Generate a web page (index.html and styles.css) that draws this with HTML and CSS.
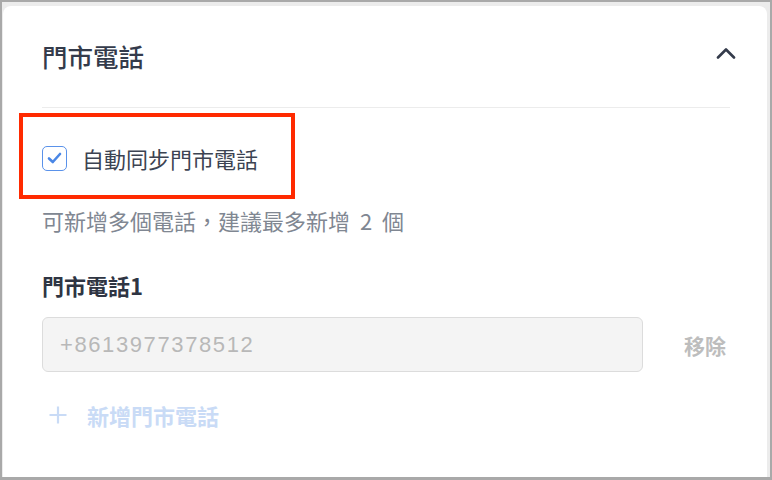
FILE: index.html
```html
<!DOCTYPE html>
<html lang="zh-Hant">
<head>
    <meta charset="UTF-8">
    <meta name="viewport" content="width=device-width, initial-scale=1.0">
    <title>門市電話</title>
    <link rel="stylesheet" href="styles.css">
</head>
<body>
    <div class="frame">
        <div class="card">
            <div class="card-header">
                <h2>門市電話</h2>
                <svg class="chevron" width="20" height="12" viewBox="0 0 20 12">
                    <polyline points="2,10.5 10,2.5 18,10.5" fill="none" stroke="#343b4b" stroke-width="2.6" stroke-linecap="round" stroke-linejoin="round"/>
                </svg>
            </div>

            <label class="sync-row">
                <span class="checkbox">
                    <svg width="15" height="12" viewBox="0 0 15 12">
                        <polyline points="2,6.5 5.8,10 13,2" fill="none" stroke="#4a87e6" stroke-width="2.6" stroke-linecap="round" stroke-linejoin="round"/>
                    </svg>
                </span>
                自動同步門市電話
            </label>

            <p class="hint">可新增多個電話，建議最多新增 2 個</p>

            <div class="field-label">門市電話1</div>
            <div class="phone-row">
                <input class="phone-input" type="text" value="+8613977378512" disabled>
                <span class="remove">移除</span>
            </div>

            <div class="add-row">
                <svg width="20" height="20" viewBox="0 0 20 20">
                    <path d="M10 1.5v17M1.5 10h17" stroke="#c9dbf6" stroke-width="2.2"/>
                </svg>
                <span>新增門市電話</span>
            </div>
        </div>
    </div>
</body>
</html>
```

FILE: styles.css
```css
*, *::before { box-sizing: border-box; }
body { margin: 0; font-family: "Noto Sans CJK TC", "Noto Sans", sans-serif; }
.frame { width: 772px; height: 480px; border: 2px solid #a9a9a9; border-bottom-width: 3px; background: #ececec; padding: 4px 3px 0 1px; }
.card { height: 100%; background: #fff; border-radius: 8px 8px 0 0; padding: 0 37px 0 39px; }
.card-header { height: 102px; display: flex; align-items: center; justify-content: space-between; border-bottom: 1px solid #ececec; padding-bottom: 2px; }
.card-header h2 { margin: 0; font-size: 25.5px; font-weight: 500; color: #343b4b; }
.chevron { margin-right: -6px; margin-bottom: 6px; }
.sync-row { position: relative; display: flex; align-items: center; gap: 15px; margin-top: 34px; height: 32px; font-size: 22px; color: #3c4352; }
.sync-row::before { content: ""; position: absolute; left: -23px; top: -29px; width: 276px; height: 86px; border: 4px solid #ff2a00; }
.checkbox { width: 25px; height: 25px; border: 1.5px solid #5a92ea; border-radius: 5px; display: flex; align-items: center; justify-content: center; }
.hint { margin: 30px 0 0; line-height: 32px; font-size: 22px; word-spacing: 5px; color: #808792; }
.field-label { margin-top: 33px; line-height: 32px; font-size: 22px; font-weight: 700; color: #2f3543; }
.phone-row { display: flex; align-items: center; margin-top: 16px; }
.phone-input { width: 601px; height: 55px; padding: 0 17px; border: 1px solid #dcdcdc; border-radius: 6px; background: #f4f4f4; font-family: "Liberation Sans", sans-serif; font-size: 22px; letter-spacing: 1.6px; color: #b8b8b8; }
.remove { margin-left: 41px; font-size: 21px; font-weight: 700; color: #bdbdbd; }
.add-row { display: flex; align-items: center; gap: 19px; margin-top: 27px; height: 32px; padding-left: 6px; font-size: 22px; font-weight: 700; color: #c9dbf6; }
```
